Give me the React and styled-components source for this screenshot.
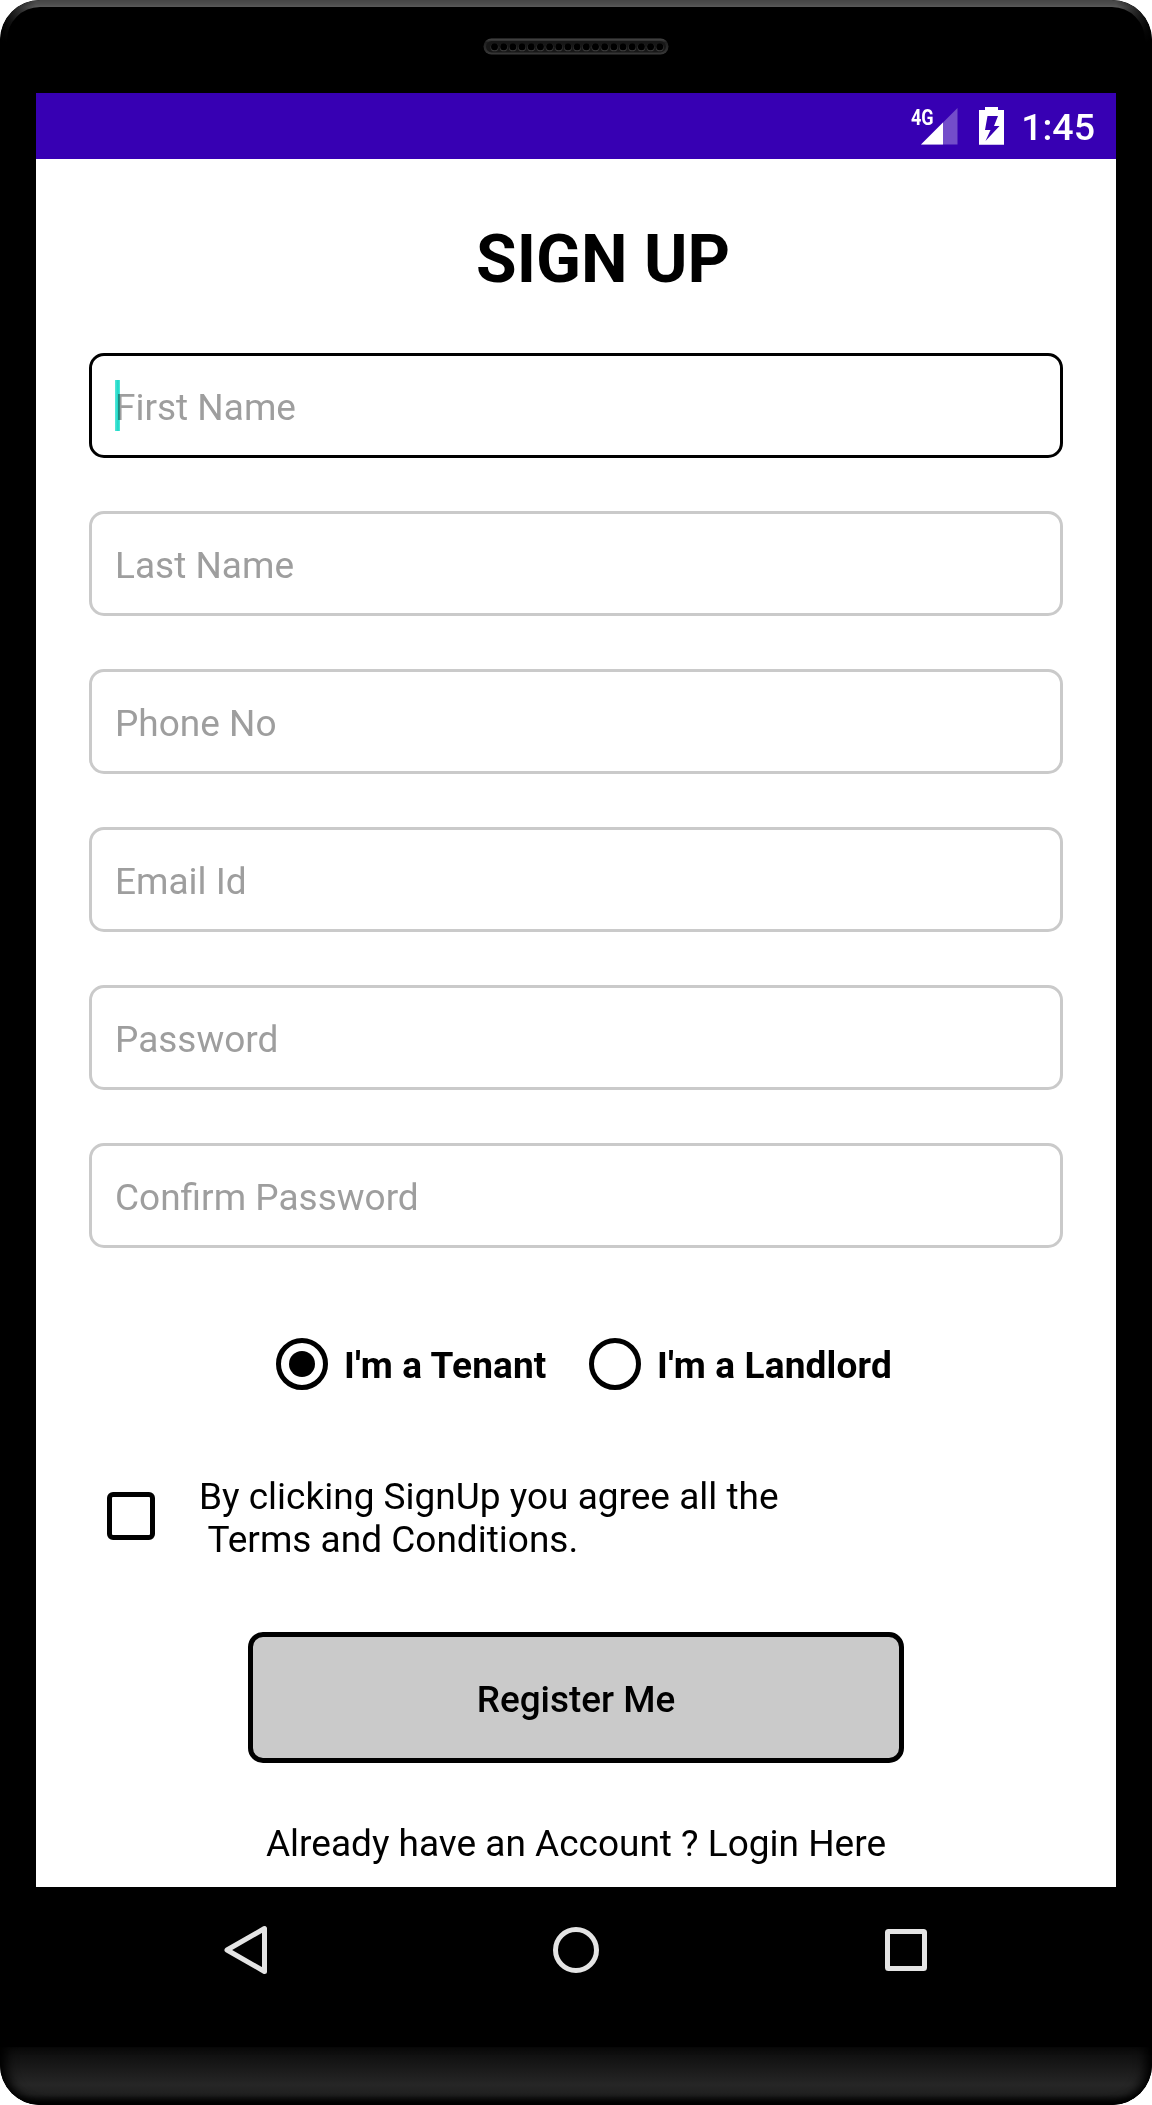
import React from "react";
import styled, { createGlobalStyle } from "styled-components";

const Global = createGlobalStyle`
  * { box-sizing: border-box; }
  body { margin: 0; background: #fff; font-family: Roboto, "Liberation Sans", sans-serif; }
`;

const Phone = styled.div`
  width: 1152px;
  height: 2105px;
  display: flex;
  flex-direction: column;
  background: #000;
  border-radius: 40px;
  overflow: hidden;
`;

const TopBezel = styled.div`
  height: 93px;
  display: flex;
  justify-content: center;
  align-items: flex-start;
  padding-top: 31px;
  border: 7px solid transparent;
  border-bottom: 0;
  border-radius: 40px 40px 0 0;
  background:
    linear-gradient(#000, #000) padding-box,
    linear-gradient(90deg, #000, transparent 36px, transparent 1116px, #000) border-box,
    linear-gradient(#454545, #4d4d4d 4px, #595959 7px, #444 18px, #000 42px) border-box;
`;

const Screen = styled.main`
  width: 1080px;
  height: 1794px;
  margin: 0 auto;
  background: #fff;
  display: flex;
  flex-direction: column;
`;

const StatusBar = styled.header`
  height: 66px;
  background: #3700b3;
  display: flex;
  align-items: flex-start;
  justify-content: flex-end;
  padding: 14px 21px 0 0;
  color: #fff;
`;

const Network = styled.span`
  width: 23px;
  height: 24px;
  font-size: 22px;
  line-height: 24px;
  font-weight: 700;
  white-space: nowrap;
  transform: scaleX(0.82);
  transform-origin: 0 0;
  margin: -1px -14px 0 0;
`;

const Clock = styled.span`
  font-size: 37.5px;
  font-weight: 500;
  line-height: 44px;
  width: 74px;
  margin: -2px 0 0 9px;
  text-align: right;
  white-space: nowrap;
`;

const Title = styled.h1`
  margin: 62px 0 0 440px;
  font-size: 66px;
  line-height: 78px;
  font-weight: 700;
  color: #000;
`;

const Form = styled.form`
  display: flex;
  flex-direction: column;
  align-items: flex-start;
  margin-top: 54px;
  padding: 0 53px;
`;

const Fields = styled.div`
  width: 974px;
  display: flex;
  flex-direction: column;
  gap: 53px;
`;

const Field = styled.label`
  height: 105px;
  display: flex;
  align-items: center;
  padding: 3px 0 0 23px;
  border: 3px solid ${(p) => (p.$focused ? "#000" : "#cacaca")};
  border-radius: 15px;
  font-size: 37px;
  line-height: 45px;
  color: #9e9e9e;
`;

const Caret = styled.span`
  width: 5px;
  height: 51px;
  margin: -4px -5px 0 0;
  background: linear-gradient(90deg, #58e7d9, #18d8c6 60%, #58e7d9);
`;

const Hint = styled.span`
  mix-blend-mode: multiply;
`;

const Radios = styled.div`
  display: flex;
  align-items: center;
  margin: 90px 0 0 187px;
  height: 52px;
`;

const RadioOption = styled.div`
  display: flex;
  align-items: center;
  width: 313px;
  gap: 16px;
  font-size: 37px;
  line-height: 45px;
  font-weight: 700;
  letter-spacing: 0.15px;
  white-space: nowrap;
`;

const RadioLabel = styled.span`
  padding-top: 3px;
`;

const RadioRing = styled.span`
  width: 52px;
  height: 52px;
  flex: none;
  border: 5.5px solid #000;
  border-radius: 50%;
  display: flex;
  align-items: center;
  justify-content: center;
`;

const RadioDot = styled.span`
  width: 26px;
  height: 26px;
  border-radius: 50%;
  background: #000;
`;

const Terms = styled.div`
  display: flex;
  align-items: center;
  margin: 83px 0 0 18px;
  height: 86px;
`;

const CheckBox = styled.span`
  width: 48px;
  height: 48px;
  border: 5px solid #000;
  border-radius: 6px;
`;

const TermsText = styled.p`
  margin: 4px 0 0 44px;
  font-size: 37px;
  line-height: 43px;
  white-space: pre;
`;

const RegisterButton = styled.button`
  width: 656px;
  height: 131px;
  margin: 73px 0 0 159px;
  padding: 3px 0 0;
  border: 5px solid #000;
  border-radius: 15px;
  background: #cacaca;
  font: 500 36.9px/45px Roboto, "Liberation Sans", sans-serif;
  color: #000;
`;

const LoginLink = styled.p`
  width: 974px;
  margin: 58px 0 0;
  text-align: center;
  font-size: 37px;
  line-height: 45px;
  white-space: nowrap;
`;

const NavBar = styled.nav`
  height: 160px;
  display: flex;
  align-items: flex-start;
  padding: 37px 0 0 220px;
`;

const NavIcon = styled.svg`
  width: 52px;
  height: 52px;
  margin-right: 278px;
  flex: none;
  fill: none;
  stroke: #e4e4e4;
  stroke-width: 5;
  stroke-linejoin: round;
`;

const Chin = styled.div`
  height: 58px;
  border-radius: 0 0 40px 40px;
  background: linear-gradient(#0b0b0b, #161616 16px, #262626 38px, #202020 47px, #000 58px);
  box-shadow: inset 12px 0 12px -6px #000, inset -12px 0 12px -6px #000, inset 0 -4px 8px -2px #000;
`;

const fields = ["First Name", "Last Name", "Phone No", "Email Id", "Password", "Confirm Password"];

function Speaker() {
  return (
    <svg width="186" height="17" viewBox="0 0 186 17">
      <defs>
        <linearGradient id="grille" x1="0" y1="0" x2="0" y2="1">
          <stop offset="0" stopColor="#484848" />
          <stop offset=".25" stopColor="#202020" />
          <stop offset="1" stopColor="#383838" />
        </linearGradient>
      </defs>
      <rect x=".5" y=".5" width="185" height="16" rx="8" fill="url(#grille)" />
      <rect x="3" y="3" width="180" height="11.5" rx="5.8" fill="#171717" />
      {Array.from({ length: 19 }, (_, i) => (
        <g key={i}>
          <circle cx={11.5 + i * 9.18} cy="9.4" r="3.9" fill="#3c3c3c" />
          <circle cx={11.5 + i * 9.18} cy="8.7" r="3.5" fill="#000" />
        </g>
      ))}
    </svg>
  );
}

function StatusIcons() {
  return (
    <svg width="92" height="40" viewBox="920 107 92 40">
      <path d="M921 144.5L957.5 108V144.5Z" fill="#fff" fillOpacity=".3" />
      <path d="M921 144.5L943 122.5V144.5Z" fill="#fff" />
      <path
        fillRule="evenodd"
        fill="#fff"
        d="M985 107H998V110H1004V144.700H979V110H985ZM987.500 116L985 130H990.500L985.500 141L999.500 126H994L998 116Z"
      />
    </svg>
  );
}

export default function App() {
  return (
    <>
      <Global />
      <Phone>
        <TopBezel>
          <Speaker />
        </TopBezel>
        <Screen>
          <StatusBar>
            <Network>4G</Network>
            <StatusIcons />
            <Clock>1:45</Clock>
          </StatusBar>
          <Title>SIGN UP</Title>
          <Form>
            <Fields>
              {fields.map((name, i) => (
                <Field key={name} $focused={i === 0}>
                  {i === 0 && <Caret />}
                  <Hint>{name}</Hint>
                </Field>
              ))}
            </Fields>
            <Radios>
              <RadioOption>
                <RadioRing><RadioDot /></RadioRing>
                <RadioLabel>I'm a Tenant</RadioLabel>
              </RadioOption>
              <RadioOption>
                <RadioRing />
                <RadioLabel>I'm a Landlord</RadioLabel>
              </RadioOption>
            </Radios>
            <Terms>
              <CheckBox />
              <TermsText>{"By clicking SignUp you agree all the\n Terms and Conditions."}</TermsText>
            </Terms>
            <RegisterButton type="button">Register Me</RegisterButton>
            <LoginLink>Already have an Account ? Login Here</LoginLink>
          </Form>
        </Screen>
        <NavBar>
          <NavIcon viewBox="220 1924 52 52">
            <path d="M227 1950L264.500 1928.500V1971.500Z" />
          </NavIcon>
          <NavIcon viewBox="550 1924 52 52">
            <circle cx="576" cy="1950" r="20.500" />
          </NavIcon>
          <NavIcon viewBox="880 1924 52 52">
            <rect x="887.500" y="1931.500" width="37" height="37" rx="1" />
          </NavIcon>
        </NavBar>
        <Chin />
      </Phone>
    </>
  );
}
